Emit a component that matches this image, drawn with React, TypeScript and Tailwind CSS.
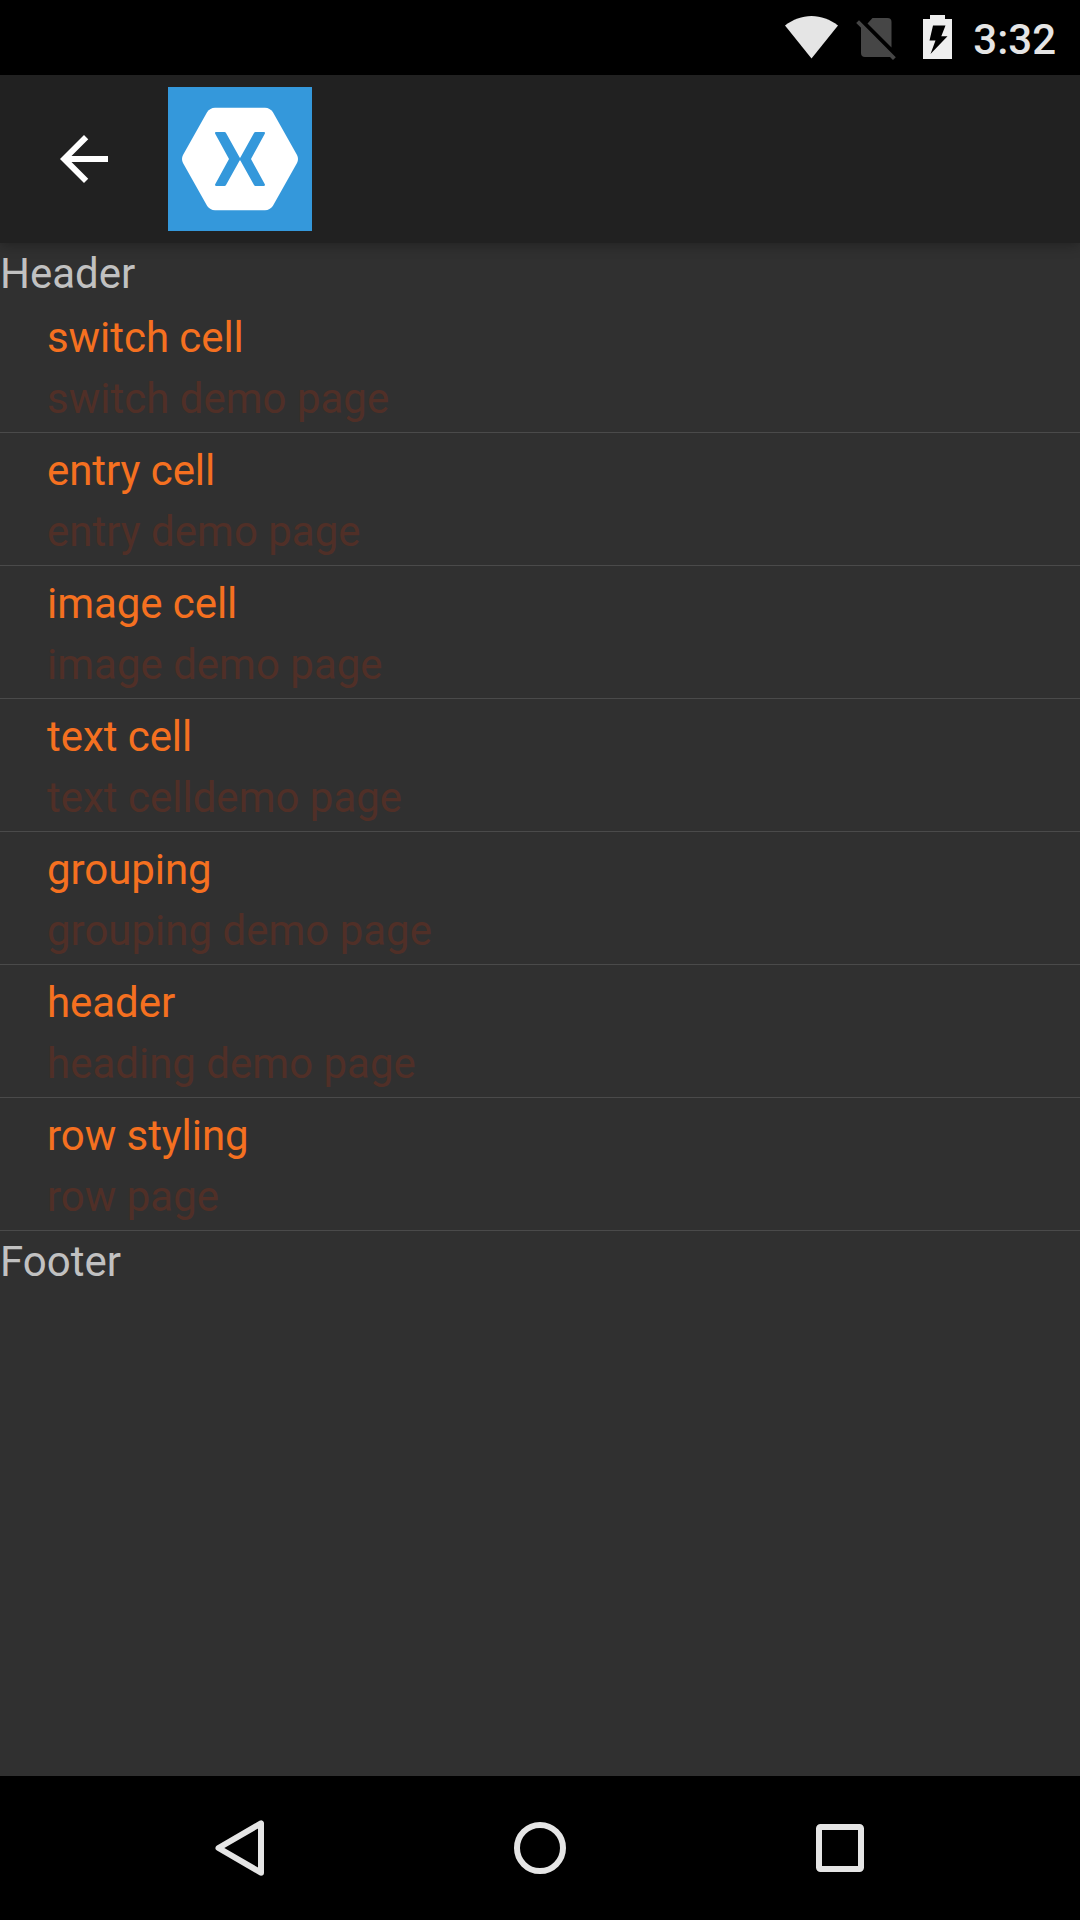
const rows = [
  { title: "switch cell", detail: "switch demo page" },
  { title: "entry cell", detail: "entry demo page" },
  { title: "image cell", detail: "image demo page" },
  { title: "text cell", detail: "text celldemo page" },
  { title: "grouping", detail: "grouping demo page" },
  { title: "header", detail: "heading demo page" },
  { title: "row styling", detail: "row page" },
];

function StatusBar() {
  return (
    <div className="flex h-[75px] shrink-0 items-start justify-end bg-black pr-[24px]">
      <svg className="mr-[17px] h-[75px] w-[54px]" viewBox="0 0 54 75" fill="#e5e5e5">
        <path d="M0 25.5C8 19.5 17 16 26.5 16S45 19.5 53 25.5L26.500 58.500Z" />
      </svg>
      <svg className="mr-[27px] h-[75px] w-[40px]" viewBox="0 0 40 75" fill="#464646">
        <path d="M11.500 23.500L16.500 18H31.500Q35.500 18 35.500 22V47.500Z" />
        <path d="M3 20.300L39.800 57.200L37 60L34 57H9Q5 57 5 53V27.700L0.200 23Z" />
      </svg>
      <svg className="mr-[21px] h-[75px] w-[29px]" viewBox="0 0 29 75">
        <path fill="#eeeeee" d="M7 15H22V19H29V59H0V19H7Z" />
        <path fill="#000000" d="M10 25.500H22.500L18.300 36.300H24.500L7.500 54L12.500 40.500H6.500Z" />
      </svg>
      <span className="pt-[15px] text-[42px] leading-[49px] font-medium text-[#e5e5e5]">3:32</span>
    </div>
  );
}

function AppBar() {
  return (
    <header className="relative flex h-[168px] shrink-0 items-center bg-[#212121] pl-[48px] shadow-[0_2px_12px_rgba(0,0,0,0.3)]">
      <svg className="h-[72px] w-[72px]" viewBox="0 0 24 24" fill="#ffffff">
        <path d="M20 11H7.830l5.590-5.590L12 4l-8 8 8 8 1.410-1.410L7.830 13H20v-2z" />
      </svg>
      <svg className="ml-[48px] h-[144px] w-[144px]" viewBox="0 0 144 144">
        <rect width="144" height="144" fill="#3498db" />
        <path
          fill="#ffffff"
          d="M47 20.700H97Q102 20.900 104.800 25L129 68Q131 72 129 76L104.800 119Q102 123.100 97 123.300H47Q42 123.100 39.200 119L15 76Q13 72 15 68L39.200 25Q42 20.900 47 20.700Z"
        />
        <path
          fill="#3498db"
          d="M48 45H56.500Q57.500 45 58 46L71.500 70.300Q72 71.300 72.500 70.300L86 46Q86.500 45 87.500 45H96Q97.500 45.300 96.800 46.700L83 72L96.800 97.300Q97.500 98.700 96 99H87.500Q86.500 99 86 98L72.500 73.700Q72 72.700 71.500 73.700L58 98Q57.500 99 56.500 99H48Q46.500 98.700 47.200 97.300L61 72L47.200 46.700Q46.500 45.300 48 45Z"
        />
      </svg>
    </header>
  );
}

function NavBar() {
  return (
    <nav className="flex h-[144px] shrink-0 items-center justify-center gap-[228px] bg-black">
      <svg className="h-[72px] w-[72px]" viewBox="0 0 72 72" fill="none" stroke="#e5e5e5">
        <path d="M57 11.300V60.700L14.500 36Z" strokeWidth="6" strokeLinejoin="round" />
      </svg>
      <svg className="h-[72px] w-[72px]" viewBox="0 0 72 72" fill="none" stroke="#e5e5e5">
        <circle cx="36" cy="36" r="23" strokeWidth="6" />
      </svg>
      <svg className="h-[72px] w-[72px]" viewBox="0 0 72 72" fill="none" stroke="#e5e5e5">
        <rect x="15" y="15" width="42" height="42" rx="1.500" strokeWidth="6" />
      </svg>
    </nav>
  );
}

export default function App() {
  return (
    <div className="flex h-[1920px] w-[1080px] flex-col overflow-hidden bg-[#303030] font-[Roboto,sans-serif] text-[42px] leading-[61px]">
      <StatusBar />
      <AppBar />
      <main className="flex flex-1 flex-col">
        <div className="h-[57px] text-[#c1c1c1]">Header</div>
        {rows.map((row) => (
          <div key={row.title} className="h-[133px] border-b border-[#4a4a4a] pt-[7px] pl-[47px]">
            <div className="tracking-[-0.06px] text-[#f57020]">{row.title}</div>
            <div className="text-[#502f27]">{row.detail}</div>
          </div>
        ))}
        <div className="text-[#c1c1c1]">Footer</div>
      </main>
      <NavBar />
    </div>
  );
}
